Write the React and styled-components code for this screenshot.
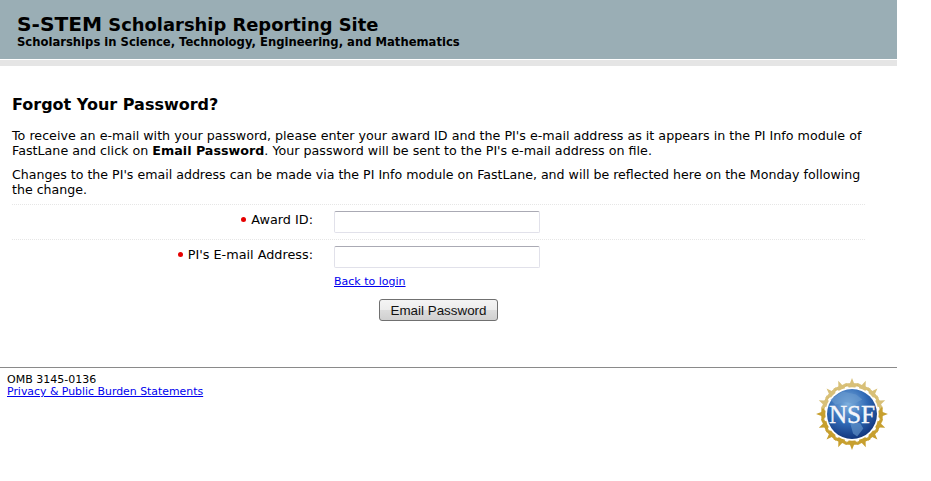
import React from 'react';
import styled, { createGlobalStyle } from 'styled-components';

const Global = createGlobalStyle`
  html, body { margin: 0; padding: 0; background: #fff; }
  body { font-family: "DejaVu Sans", Verdana, sans-serif; color: #000; }
`;
const Page = styled.div`width: 897px;`;
const Banner = styled.header`
  height: 59px; background: #9aaeb5; padding: 14px 0 0 17px; box-sizing: border-box;
`;
const SiteTitle = styled.div`
  font-size: 17.9px; font-weight: bold; line-height: 21px; white-space: nowrap;
`;
const Acronym = styled.span`font-size: 20.2px;`;
const SiteSub = styled.div`font-size: 11.6px; font-weight: bold; line-height: 14px; white-space: nowrap;`;
const Band = styled.div`height: 6px; margin-top: 1px; background: #e5e5e5;`;
const Main = styled.main`padding: 29px 32px 0 12px;`;
const Heading = styled.h1`font-size: 16px; font-weight: bold; line-height: 20px; margin: 0 0 13px;`;
const Para = styled.p`
  font-size: ${p => p.$size}px; line-height: 15px; margin: 0 ${p => p.$bleed}px 9px 0;
  &:last-of-type { margin-bottom: 7px; }
`;
const Row = styled.div`
  display: grid; grid-template-columns: 301px 206px; column-gap: 21px;
  border-top: 1px dotted #e6e6e6; padding: 6px 0;
  align-items: start;
`;
const Label = styled.label`font-size: 12.8px; line-height: 18px; text-align: right; white-space: nowrap;`;
const Req = styled.span`
  display: inline-block; width: 5px; height: 5px; border-radius: 50%; background: #e60000;
  margin-right: 5px; vertical-align: 2px;
`;
const Field = styled.input`
  box-sizing: border-box; width: 206px; height: 22px; margin: 0; padding: 1px 3px; background: #fff;
  border: 1px solid #e1e1ea; border-top-color: #aaaab4; border-radius: 2px; outline: 0;
`;
const LinkRow = styled.div`padding: 1px 0 0 322px; font-size: 11px; line-height: 14px;`;
const SmallLink = styled.a`font-size: ${p => p.$size}px; line-height: 12px; color: #0000ee; text-decoration: underline;`;
const ButtonRow = styled.div`display: flex; padding: 10px 0 0 367px;`;
const Button = styled.button`
  box-sizing: border-box; width: 119px; height: 22px; padding: 0; font-family: "Liberation Sans", Arial, sans-serif;
  font-size: 13.4px; color: #111; border: 1px solid #707070; border-radius: 3px;
  background: linear-gradient(#f4f4f4 0%, #ececec 50%, #dcdcdc 52%, #d0d0d0 100%);
`;
const Footer = styled.footer`
  margin-top: 46px; border-top: 1px solid #8a8a8a; padding: 6px 8px 0 7px;
  display: flex; justify-content: space-between; align-items: flex-start; height: 90px; box-sizing: border-box;
`;
const FooterText = styled.div`font-size: 11px; line-height: 12px;`;
const Seal = styled.svg`display: block; width: 74px; height: 74px; margin-top: 3px; flex: none;`;

const rays = Array.from({ length: 16 }, (_, i) => i * 22.5);

function NsfSeal() {
  return (
    <Seal viewBox="0 0 72 72" aria-label="NSF logo">
      <defs>
        <radialGradient id="globe" cx="42%" cy="30%" r="78%">
          <stop offset="0%" stopColor="#7fb0de" />
          <stop offset="50%" stopColor="#2f69b5" />
          <stop offset="100%" stopColor="#0c2a70" />
        </radialGradient>
      </defs>
      <circle cx="36" cy="36" r="28.5" fill="none" stroke="#d2b45c" strokeWidth="2.5" />
      {rays.map(a => (
        <path
          key={a}
          transform={`rotate(${a} 36 36)`}
          d="M36 1 L38 6.2 L43.5 6.4 L39.2 9.8 L40.7 15 L36 12 L31.3 15 L32.8 9.8 L28.5 6.4 L34 6.2 Z"
          fill={a > 70 && a < 290 ? '#c79f2e' : '#d8c078'}
        />
      ))}
      <circle cx="36" cy="36" r="26" fill="#fff" />
      <circle cx="36" cy="36" r="24.3" fill="url(#globe)" />
      <path d="M15 22 L27 14 L40 17 L46 22 L38 26 L29 24 L20 27 Z M34 44 L44 45 L47 50 L41 58 L37 55 Z" fill="#6b9bcf" opacity="0.6" />
      <text x="36" y="44.5" textAnchor="middle" fontFamily="Liberation Serif, serif" fontSize="25.5" fill="#f4f6fb" stroke="#f4f6fb" strokeWidth="0.4" textLength="45" lengthAdjust="spacingAndGlyphs">NSF</text>
    </Seal>
  );
}

export default function App() {
  return (
    <Page>
      <Global />
      <Banner>
        <SiteTitle><Acronym>S-STEM</Acronym> Scholarship Reporting Site</SiteTitle>
        <SiteSub>Scholarships in Science, Technology, Engineering, and Mathematics</SiteSub>
      </Banner>
      <Band />
      <Main>
        <Heading>Forgot Your Password?</Heading>
        <Para $size={12.7} $bleed={-6}>To receive an e-mail with your password, please enter your award ID and the PI's e-mail address as it appears in the PI Info module of FastLane and click on <b>Email Password</b>. Your password will be sent to the PI's e-mail address on file.</Para>
        <Para $size={12.6} $bleed={0}>Changes to the PI's email address can be made via the PI Info module on FastLane, and will be reflected here on the Monday following the change.</Para>
        <Row>
          <Label><Req />Award ID:</Label>
          <Field />
        </Row>
        <Row>
          <Label><Req />PI's E-mail Address:</Label>
          <Field />
        </Row>
        <LinkRow><SmallLink href="#" $size={11}>Back to login</SmallLink></LinkRow>
        <ButtonRow><Button>Email Password</Button></ButtonRow>
      </Main>
      <Footer>
        <FooterText>
          OMB 3145-0136<br />
          <SmallLink href="#" $size={10.9}>Privacy &amp; Public Burden Statements</SmallLink>
        </FooterText>
        <NsfSeal />
      </Footer>
    </Page>
  );
}
